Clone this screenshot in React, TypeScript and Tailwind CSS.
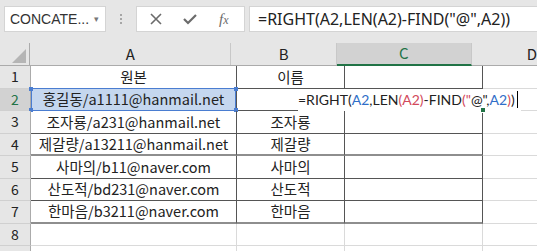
import React from "react";

const cellFont = { fontFamily: '"Noto Sans CJK KR", "Noto Sans", sans-serif' };

const rows = [
  { n: 1, a: "원본", b: "이름" },
  { n: 2, a: "홍길동/a1111@hanmail.net", b: "" },
  { n: 3, a: "조자룡/a231@hanmail.net", b: "조자룡" },
  { n: 4, a: "제갈량/a13211@hanmail.net", b: "제갈량" },
  { n: 5, a: "사마의/b11@naver.com", b: "사마의" },
  { n: 6, a: "산도적/bd231@naver.com", b: "산도적" },
  { n: 7, a: "한마음/b3211@naver.com", b: "한마음" },
  { n: 8, a: null, b: null },
  { n: 9, a: null, b: null },
];

function Toolbar() {
  return (
    <div className="flex h-[43px] items-start pt-[6px] pl-[4px]" style={{ fontFamily: '"Noto Sans", sans-serif' }}>
      <div className="flex h-[26px] w-[102px] items-center justify-between border border-[#d4d4d4] bg-white pl-[5px] pr-[6px] text-[#333]">
        <span className="text-[14px]" style={{ fontFamily: '"Liberation Sans", sans-serif' }}>
          CONCATE...
        </span>
        <span className="text-[9px] text-[#777]">▾</span>
      </div>
      <div className="ml-[14px] mt-[8px] flex flex-col gap-[2px]">
        <span className="h-[2px] w-[2px] bg-[#a6a6a6]" />
        <span className="h-[2px] w-[2px] bg-[#a6a6a6]" />
        <span className="h-[2px] w-[2px] bg-[#a6a6a6]" />
      </div>
      <div className="ml-[14px] flex h-[26px] w-[109px] items-center border border-[#d4d4d4] bg-white">
        <svg width="14" height="14" viewBox="0 0 14 14" className="ml-[12px]">
          <path d="M2 2 L12 12 M12 2 L2 12" stroke="#6b6b6b" strokeWidth="1.6" />
        </svg>
        <svg width="16" height="14" viewBox="0 0 16 14" className="ml-[19px]">
          <path d="M2 7 L6 11 L14 3" stroke="#6b6b6b" strokeWidth="2.2" fill="none" />
        </svg>
        <span className="ml-[21px] text-[15px] italic text-[#6b6b6b]" style={{ fontFamily: '"Liberation Serif", serif' }}>
          f<span className="text-[12px]">x</span>
        </span>
      </div>
      <div className="ml-[4px] flex h-[26px] flex-1 items-center border border-r-0 border-[#d4d4d4] bg-white pl-[8px] text-[16px] text-[#222]">
        =RIGHT(A2,LEN(A2)-FIND("@",A2))
      </div>
    </div>
  );
}

function HeaderRow() {
  return (
    <div className="flex h-[23px] border-b border-[#ababab] text-[15px] text-[#222]" style={cellFont}>
      <div className="relative w-[31px] border-r border-[#ababab]">
        <div className="absolute bottom-[2px] right-[3px] h-0 w-0 border-b-[14px] border-l-[14px] border-b-[#b5b5b5] border-l-transparent" />
      </div>
      <div className="flex w-[206px] items-center justify-center border-r border-[#c8c8c8]">A</div>
      <div className="flex w-[108px] items-center justify-center border-r border-[#c8c8c8]">B</div>
      <div className="-mb-px flex w-[138px] items-center justify-center border-b-2 border-r border-b-[#217346] border-r-[#c8c8c8] bg-[#d2d2d2] text-[#217346]">
        C
      </div>
      <div className="flex flex-1 items-center pl-[55px]">D</div>
    </div>
  );
}

function Formula() {
  const blue = "text-[#2f6ec8]";
  const red = "text-[#d2495a]";
  return (
    <span
      className="absolute left-[298px] top-0 flex h-full items-center whitespace-nowrap bg-white pr-[3px] text-[14px] text-[#222]"
      style={{ fontFamily: 'Lato, "Noto Sans", sans-serif' }}
    >
      =RIGHT(<span className={blue}>A2</span>,LEN<span className={red}>(A2)</span>-FIND<span className={red}>("</span>@",
      <span className={blue}>A2</span>
      <span className={red}>)</span>)
      <span className="ml-[2px] h-[17px] w-px bg-black" />
    </span>
  );
}

function Row({ r }: { r: (typeof rows)[number] }) {
  const inTable = r.n <= 7;
  const thick = r.n === 4 || r.n === 7;
  const sel = r.n === 2;
  const bottom = inTable
    ? thick
      ? "border-b-2 border-b-[#8e8e8e]"
      : "border-b border-b-[#555]"
    : "border-b border-b-[#dadada]";
  const right = inTable ? "border-r border-r-[#555]" : "border-r border-r-[#dadada]";
  return (
    <div className="relative flex h-[22.5px] text-[14.5px] text-[#222]" style={cellFont}>
      <div
        className={`flex w-[31px] items-center justify-center border-b border-r border-b-[#d0d0d0] border-r-[#ababab] text-[14px] ${
          sel ? "bg-[#d2d2d2] text-[#217346]" : "bg-[#e6e6e6]"
        }`}
      >
        {r.n <= 8 ? r.n : ""}
      </div>
      <div className={`relative flex w-[206px] items-center justify-center ${bottom} ${right} ${sel ? "bg-[#c5d7ef]" : ""}`}>
        {r.a}
        {sel && (
          <>
            <div className="absolute inset-x-0 -top-px -bottom-px border border-[#4a7dd1]" />
            <div className="absolute -left-[2px] -top-[2px] h-[4px] w-[4px] bg-[#4a7dd1]" />
            <div className="absolute -right-[2px] -top-[2px] h-[4px] w-[4px] bg-[#4a7dd1]" />
            <div className="absolute -bottom-[2px] -left-[2px] h-[4px] w-[4px] bg-[#4a7dd1]" />
            <div className="absolute -bottom-[2px] -right-[2px] h-[4px] w-[4px] bg-[#4a7dd1]" />
          </>
        )}
      </div>
      <div className={`flex w-[108px] items-center justify-center ${bottom} ${right}`}>{r.b}</div>
      <div className={`relative w-[138px] ${sel ? "border-b-2 border-b-[#217346]" : bottom} ${right}`}>
        {sel && <div className="absolute -bottom-[4px] -right-[4px] z-10 h-[6px] w-[6px] border border-white bg-[#217346]" />}
      </div>
      <div className="flex-1 border-b border-b-[#dadada]" />
      {sel && <Formula />}
    </div>
  );
}

export default function App() {
  return (
    <div className="h-[251px] w-[537px] overflow-hidden bg-[#e6e6e6]">
      <Toolbar />
      <HeaderRow />
      <div className="bg-white">
        {rows.map((r) => (
          <Row key={r.n} r={r} />
        ))}
      </div>
    </div>
  );
}
